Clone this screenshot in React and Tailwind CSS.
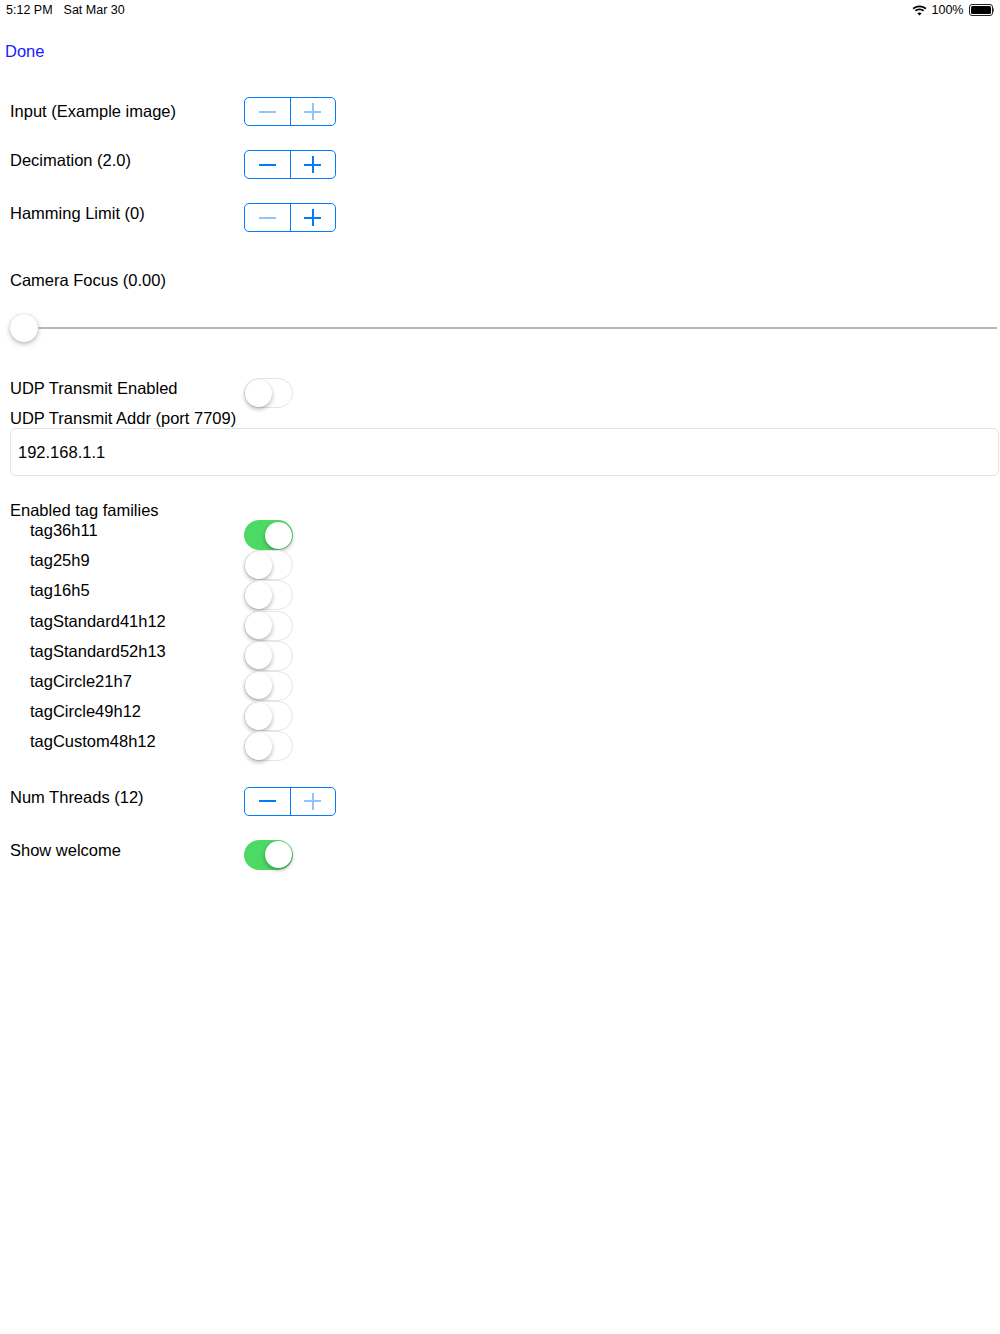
import React from 'react';

const Stepper = ({ minusOn, plusOn }) => (
  <div className="flex h-[29px] w-[92px] shrink-0 rounded-[5px] border border-[#007aff]">
    <div className="flex flex-1 items-center justify-center border-r border-[#007aff]">
      <div className={`h-[2px] w-[17px] ${minusOn ? 'bg-[#007aff]' : 'bg-[#8fc4ff]'}`} />
    </div>
    <div className="flex flex-1 items-center justify-center">
      <div className="relative h-[17px] w-[17px]">
        <div className={`absolute left-0 top-1/2 h-[2px] w-full -translate-y-1/2 ${plusOn ? 'bg-[#007aff]' : 'bg-[#8fc4ff]'}`} />
        <div className={`absolute top-0 left-1/2 h-full w-[2px] -translate-x-1/2 ${plusOn ? 'bg-[#007aff]' : 'bg-[#8fc4ff]'}`} />
      </div>
    </div>
  </div>
);

const Toggle = ({ on }) => (
  <div
    className={`flex h-[30px] w-[49px] shrink-0 items-center rounded-full ${
      on ? 'justify-end bg-[#4cd964] p-[1.5px]' : 'justify-start border-[1.5px] border-[#e5e5e5] bg-white'
    }`}
  >
    <div className="h-[27px] w-[27px] rounded-full bg-white shadow-[0_2px_4px_rgba(0,0,0,0.3)]" />
  </div>
);

const StepRow = ({ label, minusOn, plusOn, labelTop = 0, className = '' }) => (
  <div className={`flex items-start ${className}`}>
    <div className="w-[234px] shrink-0" style={{ paddingTop: labelTop }}>
      {label}
    </div>
    <Stepper minusOn={minusOn} plusOn={plusOn} />
  </div>
);

const tagFamilies = [
  ['tag36h11', true],
  ['tag25h9', false],
  ['tag16h5', false],
  ['tagStandard41h12', false],
  ['tagStandard52h13', false],
  ['tagCircle21h7', false],
  ['tagCircle49h12', false],
  ['tagCustom48h12', false],
];

const App = () => {
  return (
    <div className="min-h-[1334px] bg-white font-['Liberation_Sans',Arial,sans-serif] text-[16.5px] leading-[20px] text-black">
      {/* status bar */}
      <div className="flex h-[20px] items-center justify-between pl-[6px] pr-[6px] text-[12.5px] leading-[14px]">
        <div className="flex gap-[11px]">
          <span>5:12 PM</span>
          <span>Sat Mar 30</span>
        </div>
        <div className="flex items-center gap-[5px]">
          <svg width="15" height="11" viewBox="0 0 15 11">
            <path d="M7.5 2.2c2.2 0 4.2.8 5.7 2.2l1.2-1.3C12.6 1.4 10.2.4 7.5.4S2.4 1.4.6 3.1l1.2 1.3c1.5-1.4 3.5-2.2 5.7-2.2z" fill="#000" />
            <path d="M7.5 5.3c1.3 0 2.5.5 3.4 1.3l1.2-1.3C10.9 4.2 9.3 3.5 7.5 3.5S4.1 4.2 2.9 5.3l1.2 1.3c.9-.8 2.1-1.3 3.4-1.3z" fill="#000" />
            <path d="M7.5 10.6 9.7 8.3c-.6-.5-1.4-.9-2.2-.9s-1.6.3-2.2.9z" fill="#000" />
          </svg>
          <span>100%</span>
          <div className="flex items-center">
            <div className="flex h-[12px] w-[24px] items-center rounded-[3px] border border-[#222] p-[1px]">
              <div className="h-full w-full rounded-[1.5px] bg-black" />
            </div>
            <div className="h-[4px] w-[1.5px] rounded-r bg-[#666]" />
          </div>
        </div>
      </div>

      {/* nav */}
      <div className="flex h-[62px] items-center px-[5px] text-[#1a1aff]">Done</div>

      <div className="pl-[10px] pr-[1px]">
        <StepRow className="mt-[15px]" label="Input (Example image)" labelTop={4} minusOn={false} plusOn={false} />
        <StepRow className="mt-[24px]" label="Decimation (2.0)" minusOn plusOn />
        <StepRow className="mt-[24px]" label="Hamming Limit (0)" minusOn={false} plusOn />

        <div className="mt-[38px]">Camera Focus (0.00)</div>
        <div className="mt-[24px] flex h-[28px] items-center pr-[2px]">
          <div className="h-[28px] w-[28px] shrink-0 rounded-full bg-white shadow-[0_2px_5px_rgba(0,0,0,0.28),0_0_1px_rgba(0,0,0,0.2)]" />
          <div className="h-[2px] flex-1 bg-[#b6b6b6]" />
        </div>

        <div className="mt-[36px] flex items-start">
          <div className="w-[234px] shrink-0">UDP Transmit Enabled</div>
          <Toggle on={false} />
        </div>
        <div>UDP Transmit Addr (port 7709)</div>
        <div className="flex h-[48px] items-center rounded-[6px] border border-[#e3e3e3] px-[7px]">192.168.1.1</div>

        <div className="mt-[24px]">Enabled tag families</div>
        <div>
          {tagFamilies.map(([name, on]) => (
            <div key={name} className="flex h-[30.2px] items-start">
              <div className="w-[234px] shrink-0 pl-[20px]">{name}</div>
              <Toggle on={on} />
            </div>
          ))}
        </div>

        <StepRow className="mt-[25px]" label="Num Threads (12)" minusOn plusOn={false} />

        <div className="mt-[24px] flex items-start">
          <div className="w-[234px] shrink-0">Show welcome</div>
          <Toggle on />
        </div>
      </div>
    </div>
  );
};

export default App;
